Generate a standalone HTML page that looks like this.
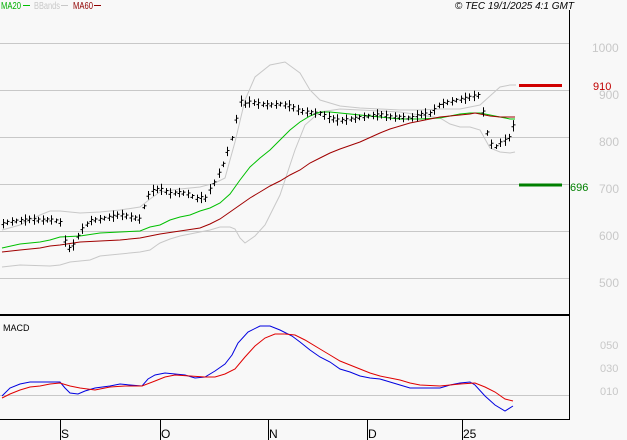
<!DOCTYPE html>
<html><head><meta charset="utf-8"><style>
html,body{margin:0;padding:0;background:#f8f8f8;}
svg{display:block;font-family:"Liberation Sans",sans-serif;}
</style></head><body>
<svg id="s" width="627" height="440" viewBox="0 0 627 440" xmlns="http://www.w3.org/2000/svg">
<rect width="627" height="440" fill="#f8f8f8"/>
<g stroke="#c8c8c8" stroke-width="1">
<line x1="0" y1="43.5" x2="569" y2="43.5"/>
<line x1="0" y1="90.5" x2="569" y2="90.5"/>
<line x1="0" y1="137.5" x2="569" y2="137.5"/>
<line x1="0" y1="184.5" x2="569" y2="184.5"/>
<line x1="0" y1="231.5" x2="569" y2="231.5"/>
<line x1="0" y1="278.5" x2="569" y2="278.5"/>
<line x1="0" y1="395.5" x2="569" y2="395.5"/>
</g>
<line x1="569.5" y1="10" x2="569.5" y2="420" stroke="#000"/>
<line x1="0" y1="315" x2="569" y2="315" stroke="#000" stroke-width="2"/>
<line x1="0" y1="419.5" x2="569" y2="419.5" stroke="#000"/>
<g stroke="#000"><line x1="60.5" y1="420" x2="60.5" y2="440"/><line x1="160.5" y1="420" x2="160.5" y2="440"/><line x1="268.5" y1="420" x2="268.5" y2="440"/><line x1="367.5" y1="420" x2="367.5" y2="440"/><line x1="462.5" y1="420" x2="462.5" y2="440"/></g>
<g font-size="12" fill="#000"><text x="61" y="438">S</text><text x="161" y="438">O</text><text x="269" y="438">N</text><text x="368" y="438">D</text><text x="463" y="438">25</text></g>
<g font-size="12" fill="#c8c8c8"><text x="592" y="52">1000</text><text x="599" y="99">900</text><text x="599" y="146">800</text><text x="599" y="193">700</text><text x="599" y="240">600</text><text x="599" y="287">500</text>
<text x="600" y="349" font-size="11">050</text><text x="600" y="372" font-size="11">030</text><text x="600" y="395" font-size="11">010</text></g>
<text x="1" y="9" font-size="10" fill="#00b000" textLength="20" lengthAdjust="spacingAndGlyphs">MA20</text><line x1="23" y1="5.5" x2="30" y2="5.5" stroke="#00c000"/>
<text x="34" y="9" font-size="10" fill="#c8c8c8" textLength="26" lengthAdjust="spacingAndGlyphs">BBands</text><line x1="61" y1="5.5" x2="68" y2="5.5" stroke="#c8c8c8"/>
<text x="73" y="9" font-size="10" fill="#900000" textLength="20" lengthAdjust="spacingAndGlyphs">MA60</text><line x1="94" y1="5.5" x2="101" y2="5.5" stroke="#900000"/>
<text x="574" y="9" font-size="10" font-style="italic" fill="#000" text-anchor="end">© TEC 19/1/2025 4:1 GMT</text>
<text x="3" y="331" font-size="9" fill="#000">MACD</text>
<line x1="519" y1="85.5" x2="562" y2="85.5" stroke="#d00000" stroke-width="3"/>
<text x="593" y="90" font-size="11" fill="#c00000">910</text>
<line x1="519" y1="185" x2="562" y2="185" stroke="#008000" stroke-width="3"/>
<text x="570" y="191" font-size="11" fill="#008000">696</text>
<polyline fill="none" stroke="#c8c8c8" points="2,267 20,265 50,266 60,265 70,262 90,260 100,256 140,252 150,250 157,245 160,243 170,239 180,236 190,234 200,232 210,230 220,227 230,227 235,229 240,238 245,243 255,236 265,225 280,195 295,150 305,125 320,112 340,109 360,110 380,111 400,112 420,115 440,118 450,124 460,127 470,127 480,130 490,148 500,152 510,153 515,152"/>
<polyline fill="none" stroke="#c8c8c8" points="2,230 20,225 40,215 50,211 60,211 80,213 100,212 120,210 140,207 150,199 160,192 180,189 200,187 215,183 225,178 235,142 245,100 255,77 270,65 285,62 300,73 310,90 320,100 340,106 360,108 380,109 400,110 420,110 440,109 460,109 480,105 490,96 500,87 510,85 516,85"/>
<polyline fill="none" stroke="#00c000" points="2,248 20,244 40,242 50,240 60,237 80,236 100,233 120,232 140,231 150,227 160,225 170,220 180,217 190,215 200,211 210,208 220,203 230,194 240,180 250,167 260,158 270,150 280,140 290,130 300,122 310,116 320,112 330,112 340,113 360,115 380,117 400,119 420,119 440,118 450,116 460,114 470,113 480,113 490,115 500,117 510,119 515,119"/>
<polyline fill="none" stroke="#a00000" points="2,252 20,250 40,248 50,246 60,245 80,242 100,241 120,240 140,238 150,236 160,234 180,231 200,228 210,224 220,219 230,212 240,205 250,198 260,192 270,186 280,181 290,175 300,170 310,163 320,158 330,153 340,149 360,142 380,133 390,129 400,126 410,123 420,121 430,119 440,117 450,116 460,115 470,114 475,113 480,114 490,116 500,117 510,117 515,117"/>
<polyline fill="none" stroke="#0000e0" points="2,396 10,388 20,384 30,382 50,382 60,382 65,388 70,393 78,394 85,391 95,388 110,386 120,384 130,385 142,386 148,379 155,375 165,373 175,374 185,375 195,378 205,377 215,371 225,364 232,355 238,343 248,332 260,326 270,326 280,330 292,336 300,342 310,350 320,357 330,362 340,369 350,372 360,376 370,378 380,379 390,382 400,385 410,388 420,388 440,388 450,385 460,383 470,382 475,385 485,396 495,405 505,411 513,406"/>
<polyline fill="none" stroke="#e00000" points="2,398 10,394 20,390 30,387 40,386 50,384 60,383 70,386 80,388 95,390 110,387 125,386 142,386 155,381 165,377 175,375 190,376 205,377 215,377 225,374 235,369 245,357 255,346 265,338 275,334 285,334 295,335 305,340 320,349 330,355 340,361 350,365 360,369 370,373 380,376 390,378 400,380 410,383 420,385 440,386 460,384 475,383 485,387 495,392 505,399 513,401"/>
<g id="bars" stroke="#000" stroke-width="1"></g>
</svg>
<script>
var pts=[[2,615],[10,620],[20,622],[30,625],[40,623],[50,624],[60,620],[65,575],[70,560],[75,575],[80,600],[90,622],[100,625],[110,630],[120,635],[130,630],[140,625],[145,660],[150,685],[160,690],[170,680],[180,682],[190,678],[195,668],[200,672],[205,668],[210,690],[215,705],[220,730],[225,750],[230,790],[235,810],[238,880],[245,870],[250,875],[260,870],[270,868],[280,870],[290,866],[300,855],[310,852],[320,850],[330,840],[340,835],[350,838],[360,842],[370,845],[380,848],[390,843],[400,842],[410,840],[420,848],[430,850],[440,870],[450,875],[460,880],[470,885],[478,890],[482,860],[486,815],[490,790],[494,775],[498,785],[502,790],[506,795],[510,800],[515,835]];
function v(x){for(var i=1;i<pts.length;i++){if(x<=pts[i][0]){var a=pts[i-1],b=pts[i];return a[1]+(b[1]-a[1])*(x-a[0])/(b[0]-a[0]);}}return 835;}
function y(p){return 90+(900-p)*0.47;}
var g=document.getElementById('bars'),h='';
for(var x=3;x<=515;x+=4.4){var c=v(x),r=5+((Math.round(x)*7)%8);var X=Math.round(x)+.5;
h+='<line x1="'+X+'" y1="'+y(c+r)+'" x2="'+X+'" y2="'+y(c-r)+'"/><line x1="'+(X-2)+'" y1="'+y(c-2)+'" x2="'+X+'" y2="'+y(c-2)+'"/><line x1="'+X+'" y1="'+y(c+2)+'" x2="'+(X+2)+'" y2="'+y(c+2)+'"/>';}
g.innerHTML=h;
</script>
</body></html>
